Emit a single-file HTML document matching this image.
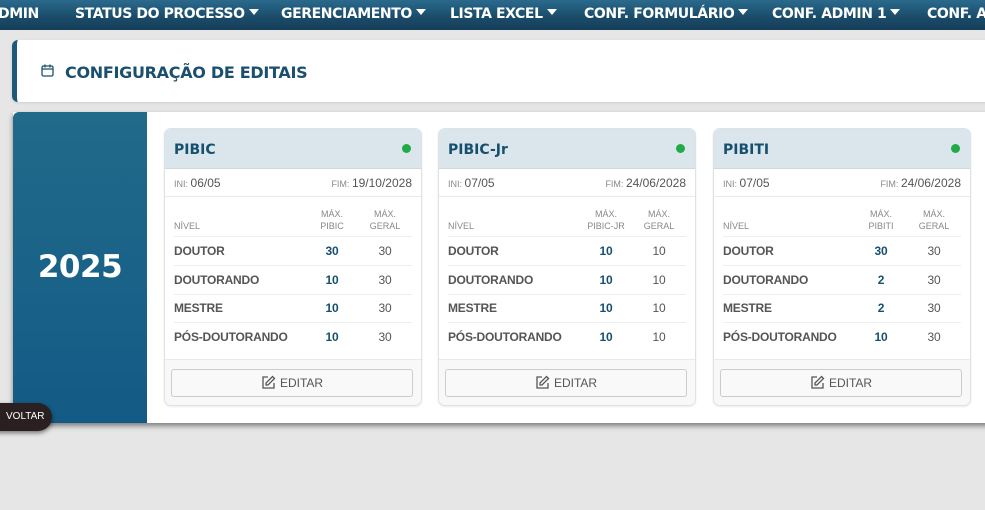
<!DOCTYPE html><html><head><meta charset="utf-8"><style>
*{box-sizing:border-box;margin:0;padding:0}
body{width:985px;height:510px;overflow:hidden;background:#e6e6e6;font-family:"Liberation Sans","DejaVu Sans",sans-serif;position:relative}
.nav{position:absolute;left:0;top:0;width:985px;height:30px;background:linear-gradient(#2a6a8c,#1a4a68 60%,#163f5a);white-space:nowrap;color:#fff;font-weight:bold;font-size:14px;font-family:"DejaVu Sans",sans-serif}
.nav span{position:absolute;top:6px;letter-spacing:-.4px}
.tri{display:inline-block;width:0;height:0;border-left:5px solid transparent;border-right:5px solid transparent;border-top:6px solid #fff;vertical-align:3px;margin-left:4px}
.hdr{position:absolute;left:12px;top:40px;width:980px;height:62px;background:#fff;border-left:5px solid #1d5a7a;border-radius:6px 0 0 6px;box-shadow:0 1px 3px rgba(0,0,0,.1)}
.hdr h1{position:absolute;left:48px;top:23px;font-size:16px;color:#1a4f6e;font-weight:bold;font-family:"DejaVu Sans",sans-serif;letter-spacing:-.3px}
.main{position:absolute;left:13px;top:112px;width:980px;height:311px;background:#fff;box-shadow:0 3px 5px rgba(0,0,0,.45)}
.year{position:absolute;left:0;top:0;width:134px;height:311px;background:linear-gradient(#216a8a,#135b86);border-radius:6px 0 0 0;color:#fff;font-weight:bold;font-size:31px;font-family:"DejaVu Sans",sans-serif;text-align:center;line-height:311px;letter-spacing:-.5px}
.card{position:absolute;top:128px;width:258px;height:278px;border:1px solid #dde2e6;border-radius:7px;background:#fff;overflow:hidden;box-shadow:0 1px 2px rgba(0,0,0,.08)}
.ch{height:40px;background:#dbe5ec;border-bottom:1px solid #cfd8de;position:relative}
.ch b{position:absolute;left:9px;top:13px;font-size:14px;color:#16506f;font-family:"DejaVu Sans",sans-serif}
.dot{position:absolute;right:10px;top:15px;width:9px;height:9px;border-radius:50%;background:#22aa44}
.dt{height:28px;border-bottom:1px solid #e8eaec;position:relative;font-size:12px;color:#555}
.dt .l{position:absolute;left:9px;top:7px}.dt .r{position:absolute;right:9px;top:7px}
.sm{font-size:9px;color:#888}
.th{position:absolute;top:79px;font-size:9px;color:#888;text-align:center;line-height:12px}
.line{position:absolute;left:9px;right:9px;height:1px;background:#eceeef}
.row{position:absolute;left:9px;right:9px;font-size:12px;font-weight:bold;color:#555;letter-spacing:-.2px}
.row .n{position:absolute;left:0}
.row .a{position:absolute;left:138px;width:40px;text-align:center;color:#16506f;font-weight:bold}
.row .g{position:absolute;left:191px;width:40px;text-align:center;font-weight:normal;color:#555}
.ft{position:absolute;left:0;right:0;top:230px;height:48px;background:#f8f8f8;border-top:1px solid #e8eaec}
.btn{position:absolute;left:6px;right:8px;top:9px;height:28px;border:1px solid #ccc;border-radius:3px;background:#f9f9f9;text-align:center;font-size:12px;color:#555;line-height:26px}
.btn svg{vertical-align:-3px;margin-right:4px}
.volt{position:absolute;left:-10px;top:403px;width:62px;height:28px;background:#2a2022;border-radius:0 14px 14px 0;color:#fff;font-size:10px;line-height:28px;padding-left:16px;box-shadow:0 2px 5px rgba(0,0,0,.5)}
</style></head><body>
<div class="nav">
<span style="left:-2px">DMIN</span>
<span style="left:75px">STATUS DO PROCESSO<i class="tri"></i></span>
<span style="left:281px">GERENCIAMENTO<i class="tri"></i></span>
<span style="left:450px">LISTA EXCEL<i class="tri"></i></span>
<span style="left:584px">CONF. FORMULÁRIO<i class="tri"></i></span>
<span style="left:772px">CONF. ADMIN 1<i class="tri"></i></span>
<span style="left:927px">CONF. A</span>
</div>
<div class="hdr"><svg style="position:absolute;left:24px;top:24px" width="13" height="13" viewBox="0 0 13 13" fill="none" stroke="#1a4f6e" stroke-width="1.3"><rect x="1" y="2" width="11" height="10" rx="1.5"/><path d="M1 5h11M4 0.5v3M9 0.5v3"/></svg><h1>CONFIGURAÇÃO DE EDITAIS</h1></div>
<div class="main"><div class="year">2025</div></div>

<div class="card" style="left:164px">
<div class="ch"><b>PIBIC</b><i class="dot"></i></div>
<div class="dt"><span class="l"><span class="sm">INI: </span>06/05</span><span class="r"><span class="sm">FIM: </span>19/10/2028</span></div>
<div class="th" style="left:9px;top:91px">NÍVEL</div>
<div class="th" style="left:147px;width:40px">MÁX.<br>PIBIC</div>
<div class="th" style="left:200px;width:40px">MÁX.<br>GERAL</div>
<div class="line" style="top:107px"></div>
<div class="row" style="top:115px"><span class="n">DOUTOR</span><span class="a">30</span><span class="g">30</span></div>
<div class="line" style="top:136px"></div>
<div class="row" style="top:144px"><span class="n">DOUTORANDO</span><span class="a">10</span><span class="g">30</span></div>
<div class="line" style="top:165px"></div>
<div class="row" style="top:172px"><span class="n">MESTRE</span><span class="a">10</span><span class="g">30</span></div>
<div class="line" style="top:193px"></div>
<div class="row" style="top:201px"><span class="n">PÓS-DOUTORANDO</span><span class="a">10</span><span class="g">30</span></div>
<div class="ft"><div class="btn"><svg width="15" height="15" viewBox="0 0 15 15" fill="none" stroke="#555" stroke-width="1.3"><path d="M7 2H2v11h11V8"/><path d="M11.5 1.5l2 2L7 10H5V8z"/></svg>EDITAR</div></div>
</div>

<div class="card" style="left:438px">
<div class="ch"><b>PIBIC-Jr</b><i class="dot"></i></div>
<div class="dt"><span class="l"><span class="sm">INI: </span>07/05</span><span class="r"><span class="sm">FIM: </span>24/06/2028</span></div>
<div class="th" style="left:9px;top:91px">NÍVEL</div>
<div class="th" style="left:142px;width:50px">MÁX.<br>PIBIC-JR</div>
<div class="th" style="left:200px;width:40px">MÁX.<br>GERAL</div>
<div class="line" style="top:107px"></div>
<div class="row" style="top:115px"><span class="n">DOUTOR</span><span class="a">10</span><span class="g">10</span></div>
<div class="line" style="top:136px"></div>
<div class="row" style="top:144px"><span class="n">DOUTORANDO</span><span class="a">10</span><span class="g">10</span></div>
<div class="line" style="top:165px"></div>
<div class="row" style="top:172px"><span class="n">MESTRE</span><span class="a">10</span><span class="g">10</span></div>
<div class="line" style="top:193px"></div>
<div class="row" style="top:201px"><span class="n">PÓS-DOUTORANDO</span><span class="a">10</span><span class="g">10</span></div>
<div class="ft"><div class="btn"><svg width="15" height="15" viewBox="0 0 15 15" fill="none" stroke="#555" stroke-width="1.3"><path d="M7 2H2v11h11V8"/><path d="M11.5 1.5l2 2L7 10H5V8z"/></svg>EDITAR</div></div>
</div>

<div class="card" style="left:713px">
<div class="ch"><b>PIBITI</b><i class="dot"></i></div>
<div class="dt"><span class="l"><span class="sm">INI: </span>07/05</span><span class="r"><span class="sm">FIM: </span>24/06/2028</span></div>
<div class="th" style="left:9px;top:91px">NÍVEL</div>
<div class="th" style="left:147px;width:40px">MÁX.<br>PIBITI</div>
<div class="th" style="left:200px;width:40px">MÁX.<br>GERAL</div>
<div class="line" style="top:107px"></div>
<div class="row" style="top:115px"><span class="n">DOUTOR</span><span class="a">30</span><span class="g">30</span></div>
<div class="line" style="top:136px"></div>
<div class="row" style="top:144px"><span class="n">DOUTORANDO</span><span class="a">2</span><span class="g">30</span></div>
<div class="line" style="top:165px"></div>
<div class="row" style="top:172px"><span class="n">MESTRE</span><span class="a">2</span><span class="g">30</span></div>
<div class="line" style="top:193px"></div>
<div class="row" style="top:201px"><span class="n">PÓS-DOUTORANDO</span><span class="a">10</span><span class="g">30</span></div>
<div class="ft"><div class="btn"><svg width="15" height="15" viewBox="0 0 15 15" fill="none" stroke="#555" stroke-width="1.3"><path d="M7 2H2v11h11V8"/><path d="M11.5 1.5l2 2L7 10H5V8z"/></svg>EDITAR</div></div>
</div>

<div class="volt">VOLTAR</div>
</body></html>
